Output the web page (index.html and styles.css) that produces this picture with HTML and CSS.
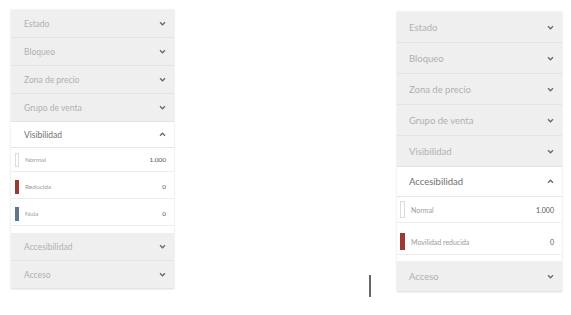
FILE: index.html
```html
<!DOCTYPE html>
<html lang="es">
<head>
	<meta charset="UTF-8">
	<title>Filtros</title>
	<link rel="stylesheet" href="styles.css">
</head>
<body>

	<div class="stage">

		<div class="panel small">
			<div class="group"><span>Estado</span><svg class="chev" viewBox="0 0 8 6"><polyline points="1,1.5 4,4.5 7,1.5"/></svg></div>
			<div class="group"><span>Bloqueo</span><svg class="chev" viewBox="0 0 8 6"><polyline points="1,1.5 4,4.5 7,1.5"/></svg></div>
			<div class="group"><span>Zona de precio</span><svg class="chev" viewBox="0 0 8 6"><polyline points="1,1.5 4,4.5 7,1.5"/></svg></div>
			<div class="group"><span>Grupo de venta</span><svg class="chev" viewBox="0 0 8 6"><polyline points="1,1.5 4,4.5 7,1.5"/></svg></div>
			<div class="group open"><span>Visibilidad</span><svg class="chev" viewBox="0 0 8 6"><polyline points="1,4.5 4,1.5 7,4.5"/></svg></div>
			<div class="items">
				<div class="item"><i class="swatch empty"></i><span class="name">Normal</span><b>1.000</b></div>
				<div class="item"><i class="swatch red"></i><span class="name">Reducida</span><b>0</b></div>
				<div class="item"><i class="swatch slate"></i><span class="name">Nula</span><b>0</b></div>
			</div>
			<div class="group"><span>Accesibilidad</span><svg class="chev" viewBox="0 0 8 6"><polyline points="1,1.5 4,4.5 7,1.5"/></svg></div>
			<div class="group"><span>Acceso</span><svg class="chev" viewBox="0 0 8 6"><polyline points="1,1.5 4,4.5 7,1.5"/></svg></div>
		</div>

		<div class="cursor"></div>

		<div class="panel large">
			<div class="group"><span>Estado</span><svg class="chev" viewBox="0 0 8 6"><polyline points="1,1.5 4,4.5 7,1.5"/></svg></div>
			<div class="group"><span>Bloqueo</span><svg class="chev" viewBox="0 0 8 6"><polyline points="1,1.5 4,4.5 7,1.5"/></svg></div>
			<div class="group"><span>Zona de precio</span><svg class="chev" viewBox="0 0 8 6"><polyline points="1,1.5 4,4.5 7,1.5"/></svg></div>
			<div class="group"><span>Grupo de venta</span><svg class="chev" viewBox="0 0 8 6"><polyline points="1,1.5 4,4.5 7,1.5"/></svg></div>
			<div class="group"><span>Visibilidad</span><svg class="chev" viewBox="0 0 8 6"><polyline points="1,1.5 4,4.5 7,1.5"/></svg></div>
			<div class="group open"><span>Accesibilidad</span><svg class="chev" viewBox="0 0 8 6"><polyline points="1,4.5 4,1.5 7,4.5"/></svg></div>
			<div class="items">
				<div class="item"><i class="swatch empty"></i><span class="name">Normal</span><b>1.000</b></div>
				<div class="item"><i class="swatch red"></i><span class="name">Movilidad reducida</span><b>0</b></div>
			</div>
			<div class="group"><span>Acceso</span><svg class="chev" viewBox="0 0 8 6"><polyline points="1,1.5 4,4.5 7,1.5"/></svg></div>
		</div>

	</div>

</body>
</html>
```

FILE: styles.css
```css
body {
	background: #fff;
	font-family: 'Lato', sans-serif;
	margin: 0;
}

.stage {
	display: flex;
	align-items: flex-start;
	padding: 10px 0 0 11px;
}

.panel {
	background: #fff;
	box-shadow: 0 0 2px rgba(0, 0, 0, .15);
}

.panel.small {
	width: 163px;
}

.panel.large {
	width: 165px;
	margin-top: 2px;
}

.cursor {
	width: 2px;
	height: 22px;
	background: #666;
	margin: 265px 26px 0 195px;
}

.group {
	display: flex;
	align-items: center;
	justify-content: space-between;
	background: #efefef;
	border-bottom: 1px solid #e3e3e3;
	color: #b0b0b0;
	font-size: 8.5px;
	height: 27px;
	padding: 0 8px 0 13px;
}

.large .group {
	height: 30px;
	font-size: 9.5px;
	padding: 0 8px 0 12px;
}

.group.open {
	background: #fff;
	color: #707070;
	border-bottom: 1px solid #e6e6e6;
	height: 25px;
}

.large .group.open {
	height: 29px;
}

.chev {
	width: 7px;
	height: 5px;
	fill: none;
	stroke: #666;
	stroke-width: 1.5;
}

.items {
	padding-bottom: 4px;
}

.large .items {
	padding-bottom: 0;
}

.item {
	display: flex;
	align-items: center;
	height: 23px;
	border-bottom: 1px solid #ececec;
	margin-bottom: 3px;
	padding: 0 8px 0 4px;
	font-size: 6.5px;
	color: #9a9a9a;
}

.large .item {
	height: 25px;
	margin-bottom: 6px;
	font-size: 7px;
	padding-left: 3px;
}

.item .name {
	flex: 1;
	margin-left: 6px;
}

.item b {
	color: #555;
	font-weight: 400;
}

.swatch {
	display: block;
	width: 4px;
	height: 14px;
	box-sizing: border-box;
}

.large .swatch {
	width: 5px;
	height: 17px;
}

.swatch.empty {
	border: 1px solid #ddd;
	background: #fff;
}

.swatch.red {
	background: #9a3a33;
}

.swatch.slate {
	background: #5d7888;
}
```
